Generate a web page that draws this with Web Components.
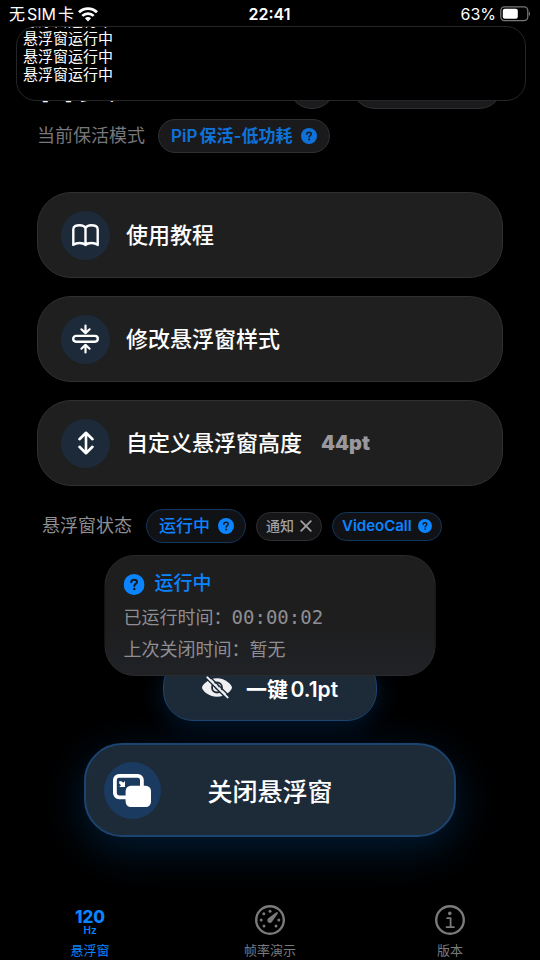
<!DOCTYPE html>
<html lang="zh-CN">
<head>
<meta charset="utf-8">
<meta name="viewport" content="width=device-width, initial-scale=1">
<title>悬浮窗</title>
<style>
  html { background: #000; }
  body {
    margin: 0;
    background: #000;
    color: #fff;
    font-family: Inter, "Noto Sans CJK SC", sans-serif;
    text-autospace: normal;
    --blue: #0a84ff;
    --card: #1f1f20;
    --line: #303033;
    --muted: #8e8e93;
  }
</style>
</head>
<body>
<app-screen>
  <status-bar slot="status"></status-bar>
  <pip-console slot="pip">
    <div>悬浮窗运行中</div>
    <div>悬浮窗运行中</div>
    <div>悬浮窗运行中</div>
    <div>悬浮窗运行中</div>
  </pip-console>
  <page-header>首页</page-header>
  <mode-row>
    <span slot="label">当前保活模式</span>
    <pill-button size="large" dim><span>PiP保活-低功耗</span><app-icon slot="icon" name="help" w="16" h="16"></app-icon></pill-button>
  </mode-row>
  <card-list>
    <menu-card icon="book" w="27" h="23">使用教程</menu-card>
    <menu-card icon="compress" w="27" h="30">修改悬浮窗样式</menu-card>
    <menu-card icon="updown" w="16" h="24">自定义悬浮窗高度<span slot="value">44pt</span></menu-card>
  </card-list>
  <status-row>
    <span slot="label">悬浮窗状态</span>
    <pill-button size="medium" active>运行中<app-icon slot="icon" name="help" w="16" h="16"></app-icon></pill-button>
    <pill-button size="small" plain>通知<app-icon slot="icon" name="close" w="12" h="12"></app-icon></pill-button>
    <pill-button size="small" active strong>VideoCall<app-icon slot="icon" name="help" w="14" h="14"></app-icon></pill-button>
    <info-popover slot="popover">
      <span slot="title">运行中</span>
      <span slot="runtime">00:00:02</span>
      <span slot="closed">暂无</span>
    </info-popover>
  </status-row>
  <action-stack>
    <glow-button size="small"><app-icon slot="icon" name="hidden" w="30" h="23"></app-icon>一键0.1pt</glow-button>
    <glow-button size="large"><app-icon slot="icon" name="pip" w="38" h="33"></app-icon>关闭悬浮窗</glow-button>
  </action-stack>
  <tab-bar slot="tabs">
    <tab-item href="#float" active><hz-mark slot="icon"></hz-mark>悬浮窗</tab-item>
    <tab-item href="#fps"><app-icon slot="icon" name="gauge" w="30" h="30"></app-icon>帧率演示</tab-item>
    <tab-item href="#version"><app-icon slot="icon" name="info" w="30" h="30"></app-icon>版本</tab-item>
  </tab-bar>
</app-screen>

<script>
const ICONS = {
  help: ['0 0 20 20', '<circle cx="10" cy="10" r="10" fill="currentColor"/><path d="M7.3 7.9C7.3 6.3 8.5 5.4 10.1 5.4C11.8 5.4 12.8 6.3 12.8 7.6C12.8 9.5 10.2 9.4 10.2 11.4" fill="none" stroke="#17191d" stroke-width="1.9" stroke-linecap="round"/><circle cx="10.2" cy="14.3" r="1.2" fill="#17191d"/>'],
  close: ['0 0 12 12', '<path d="M1.2 1.2L10.8 10.8M10.8 1.2L1.2 10.8" stroke="currentColor" stroke-width="1.8" stroke-linecap="round"/>'],
  book: ['0 0 27 23', '<path d="M13.5 20.8V4.2C12.6 2.2 10.5 1.2 7.6 1.2C4.9 1.2 1.3 1.8 1.3 5.2V20.9C3 19.6 5 19 7.4 19C10 19 12.2 19.6 13.5 21C14.8 19.6 17 19 19.6 19C22 19 24 19.6 25.7 20.9V5.2C25.7 1.8 22.1 1.2 19.4 1.2C16.5 1.2 14.4 2.2 13.5 4.2" fill="none" stroke="currentColor" stroke-width="2.4" stroke-linejoin="round"/>'],
  compress: ['0 0 27 30', '<rect x="1.2" y="11.9" width="24.6" height="5.8" rx="2.9" fill="none" stroke="currentColor" stroke-width="2.4"/><path d="M13.5 1.6V8.8M9.4 5.3L13.5 9.1L17.6 5.3M13.5 28.4V21.2M9.4 24.7L13.5 20.9L17.6 24.7" fill="none" stroke="currentColor" stroke-width="2.2" stroke-linecap="round" stroke-linejoin="round"/>'],
  updown: ['0 0 16 24', '<path d="M8 2V22M1.5 8.2L8 1.8L14.5 8.2M1.5 15.8L8 22.2L14.5 15.8" fill="none" stroke="currentColor" stroke-width="2.6" stroke-linecap="round" stroke-linejoin="round"/>'],
  hidden: ['0 0 30 23', '<path d="M15 2.2C23.5 2.2 30 8.8 30 11.5C30 14.2 23.5 20.8 15 20.8C6.5 20.8 0 14.2 0 11.5C0 8.8 6.5 2.2 15 2.2Z" fill="#f0f0f2"/><circle cx="15" cy="11.5" r="5" fill="none" stroke="#1d2a38" stroke-width="1.8"/><circle cx="15" cy="11.5" r="2.1" fill="#1d2a38"/><path d="M3.2 1.2L25 23" stroke="#1d2a38" stroke-width="1.8"/><path d="M5.4 1.4L25.6 21.4" stroke="#f0f0f2" stroke-width="2" stroke-linecap="round"/><path d="M7.4 .3L27.4 20.1" stroke="#1d2a38" stroke-width="1.4"/>'],
  pip: ['0 0 38 33', '<rect x="1.9" y="1.9" width="27" height="21.4" rx="4.2" fill="none" stroke="currentColor" stroke-width="3.8"/><rect x="12.6" y="11.8" width="25.4" height="21.2" rx="5.2" fill="currentColor"/><path d="M6.2 7.2H8.4L10.2 8.8L12 7V13H6.2L8 11.2L6.2 9.4Z" fill="currentColor"/>'],
  gauge: ['0 0 30 30', '<circle cx="15" cy="15" r="13.8" fill="none" stroke="currentColor" stroke-width="2.4"/><g fill="currentColor"><circle cx="6.2" cy="15" r="1.5"/><circle cx="8.8" cy="8.8" r="1.5"/><circle cx="15" cy="6.3" r="1.5"/><circle cx="23.8" cy="15" r="1.5"/><circle cx="9" cy="21" r="1.5"/><circle cx="21" cy="21" r="1.5"/><path d="M22.6 7.2C22 6.8 21.4 7.1 21 7.5L13.6 13.1A2.6 2.6 0 1 0 17.2 16.6L22.5 9C22.9 8.3 23 7.7 22.6 7.2Z"/></g>'],
  info: ['0 0 30 30', '<circle cx="15" cy="15" r="13.8" fill="none" stroke="currentColor" stroke-width="2.4"/><circle cx="14.8" cy="8.4" r="1.8" fill="currentColor"/><path d="M12.2 13.2H15.6V22M11.6 22.2H18.8" fill="none" stroke="currentColor" stroke-width="1.8" stroke-linecap="round" stroke-linejoin="round"/>'],
  wifi: ['0 0 20 15', '<g fill="none" stroke="currentColor" stroke-width="2.7"><path d="M1 5.3C6 .3 14 .3 19 5.3"/><path d="M4.3 8.9C7.5 5.8 12.5 5.8 15.7 8.9"/></g><path d="M6.9 11.3C8.6 9.6 11.4 9.6 13.1 11.3L10 14.6Z" fill="currentColor"/>'],
  battery: ['0 0 30 16', '<rect x=".8" y=".8" width="27" height="13.8" rx="3.8" fill="none" stroke="#77777a" stroke-width="1.3"/><rect x="2.8" y="2.7" width="15" height="10" rx="2" fill="#fff"/><path d="M29 5.4C30.4 6 30.4 9.4 29 10Z" fill="#77777a"/>']
};

function define(name, markup, setup) {
  const template = document.createElement('template');
  template.innerHTML = markup;
  customElements.define(name, class extends HTMLElement {
    constructor() {
      super();
      this.attachShadow({ mode: 'open' }).append(template.content.cloneNode(true));
    }
    connectedCallback() { if (setup) setup(this, this.shadowRoot); }
  });
}

define('app-icon', `<style>
  :host { display: block; flex: none; }
  svg { display: block; }
</style><svg aria-hidden="true"></svg>`, (el, root) => {
  const [box, shapes] = ICONS[el.getAttribute('name')];
  const svg = root.querySelector('svg');
  svg.setAttribute('viewBox', box);
  svg.setAttribute('width', el.getAttribute('w'));
  svg.setAttribute('height', el.getAttribute('h'));
  svg.innerHTML = shapes;
});

define('app-screen', `<style>
  :host { display: flex; flex-direction: column; position: relative; min-height: 100vh; overflow: hidden; }
  main { display: flex; flex-direction: column; padding: 33px 37px 24px; }
  footer { margin-top: auto; }
</style>
<slot name="status"></slot><slot name="pip"></slot>
<main><slot></slot></main>
<footer><slot name="tabs"></slot></footer>`);

define('status-bar', `<style>
  :host { display: grid; grid-template-columns: 1fr auto 1fr; align-items: center; height: 28px; padding: 0 10px 0 9px; font-size: 16px; line-height: 28px; }
  .side { display: flex; align-items: center; gap: 4px; }
  .end { justify-content: flex-end; }
  .carrier { display: flex; gap: 2px; }
  time { font-weight: 600; }
</style>
<div class="side"><span class="carrier"><span>无</span><span>SIM</span><span>卡</span></span><app-icon name="wifi" w="20" h="15"></app-icon></div>
<time>22:41</time>
<div class="side end"><span>63%</span><app-icon name="battery" w="30" h="16"></app-icon></div>`);

define('pip-console', `<style>
  :host {
    position: absolute; z-index: 3; top: 26px; left: 16px; right: 14px; height: 75px; box-sizing: border-box;
    display: flex; flex-direction: column; justify-content: flex-end; overflow: hidden;
    padding: 0 6px 16px; border: 1px solid #262628; border-radius: 20px; background: #000;
    font-size: 15px; line-height: 18px;
  }
  ::slotted(div) { flex: none; }
</style><slot></slot>`);

define('page-header', `<style>
  :host { display: flex; align-items: center; height: 48px; gap: 15px; }
  h1 { flex: 1; margin: 0; padding-bottom: 2px; font-size: 40px; line-height: 48px; font-weight: 700; }
  button { box-sizing: border-box; width: 48px; height: 48px; padding: 0; border: 1px solid var(--line); border-radius: 24px; background: #1b1b1e; }
  .wide { width: 152px; }
</style>
<h1><slot></slot></h1><button aria-label="设置"></button><button class="wide" aria-label="更多"></button>`);

define('mode-row', `<style>
  :host { display: flex; align-items: center; gap: 13px; margin-top: 10px; font-size: 18px; line-height: 34px; }
  ::slotted(span) { color: #77777b; }
</style><slot name="label"></slot><slot></slot>`);

define('pill-button', `<style>
  :host { display: block; }
  button {
    display: flex; align-items: center; box-sizing: border-box; margin: 0; white-space: nowrap;
    border: 1px solid var(--line); border-radius: 17px; background: #151517; color: var(--blue);
    font: inherit; font-weight: 500; text-autospace: normal;
  }
  :host([size=large]) button { height: 34px; padding: 0 12px; gap: 9px; font-size: 17px; font-weight: 600; background: #1a1a1c; }
  :host([size=medium]) button { height: 34px; padding: 0 11px 0 12px; gap: 8px; font-size: 17px; }
  :host([size=small]) button { height: 29px; padding: 0 9px; gap: 6px; font-size: 14px; }
  :host([strong]) button { font-size: 15px; font-weight: 600; }
  :host([active]) button { border-color: #12365c; background: #111216; }
  :host([plain]) button { color: #a0a0a4; }
  :host([dim]) button { color: #0f72d8; }
</style><button><slot></slot><slot name="icon"></slot></button>`);

define('card-list', `<style>
  :host { display: flex; flex-direction: column; gap: 18px; margin-top: 39px; }
</style><slot></slot>`);

define('menu-card', `<style>
  :host { display: block; }
  button {
    display: flex; align-items: center; gap: 16px; box-sizing: border-box; width: 100%; height: 86px; margin: 0; padding: 0 23px;
    border: 1px solid var(--line); border-radius: 34px; background: var(--card); color: #fff;
    font: inherit; font-size: 22px; font-weight: 500; line-height: 32px; text-align: left;
  }
  .disc { display: grid; place-items: center; flex: none; width: 49px; height: 49px; border-radius: 50%; background: #1c2a39; }
  ::slotted([slot=value]) { padding-left: 3px; color: #98989d; font-size: 20px; font-weight: 900; }
</style><button><span class="disc"></span><span><slot></slot></span><slot name="value"></slot></button>`, (el, root) => {
  const icon = document.createElement('app-icon');
  icon.setAttribute('name', el.getAttribute('icon'));
  icon.setAttribute('w', el.getAttribute('w'));
  icon.setAttribute('h', el.getAttribute('h'));
  root.querySelector('.disc').replaceChildren(icon);
});

define('status-row', `<style>
  :host { display: flex; align-items: center; position: relative; z-index: 2; height: 34px; margin-top: 23px; padding-left: 5px; gap: 10px; font-size: 18px; line-height: 26px; }
  ::slotted(span) { margin-right: 4px; color: var(--muted); }
</style><slot name="label"></slot><slot></slot><slot name="popover"></slot>`);

define('info-popover', `<style>
  :host {
    display: block; position: absolute; top: 46px; left: 50%; transform: translateX(-50%); width: 71%; box-sizing: border-box;
    padding: 14px 18px 9px; border: 1px solid #2b2b2d; border-radius: 30px;
    background: linear-gradient(#1e1e1f 60%, #202226); color: var(--muted); font-size: 18px; line-height: 32px;
  }
  header { display: flex; align-items: center; gap: 10px; margin-bottom: 4px; color: var(--blue); font-size: 19px; font-weight: 500; line-height: 28px; }
  p { height: 32px; margin: 0; }
  .mono { font-family: "DejaVu Sans Mono", "Noto Sans CJK SC", monospace; font-size: 19px; line-height: 28px; }
</style>
<header><app-icon name="help" w="21" h="21"></app-icon><slot name="title"></slot></header>
<p>已运行时间：<span class="mono"><slot name="runtime"></slot></span></p>
<p>上次关闭时间：<slot name="closed"></slot></p>`);

define('action-stack', `<style>
  :host { display: flex; flex-direction: column; align-items: center; gap: 22px; margin-top: 113px; }
</style><slot></slot>`);

define('glow-button', `<style>
  :host { display: block; }
  button {
    box-sizing: border-box; width: 100%; margin: 0; color: #fff; font: inherit; white-space: nowrap;
    background: #1d2a38; border: 1px solid #1b4470; text-autospace: normal;
  }
  :host([size=small]) button { display: flex; align-items: center; gap: 14px; height: 65px; padding: 0 38px 2px; border-radius: 30px; font-size: 21px; font-weight: 600; box-shadow: 0 6px 26px #0a84ff2e; }
  :host([size=large]) { width: 80%; }
  :host([size=large]) button { display: grid; grid-template-columns: 1fr auto 1fr; align-items: center; height: 94px; padding: 0 18px; border-width: 2px; border-radius: 38px; font-size: 25px; font-weight: 500; box-shadow: 0 12px 44px #0a84ff36; }
  :host([size=large]) .disc { display: grid; place-items: center; width: 57px; height: 57px; border-radius: 50%; background: #1a3a5f; }
</style><button><span class="disc"><slot name="icon"></slot></span><span><slot></slot></span></button>`);

define('hz-mark', `<style>
  :host { display: flex; flex-direction: column; align-items: center; justify-content: flex-end; height: 30px; }
  b { font-size: 17px; line-height: 15px; font-weight: 800; }
  small { font-size: 10px; line-height: 10px; font-weight: 600; }
</style><b>120</b><small>Hz</small>`);

define('tab-bar', `<style>
  :host { display: block; }
  nav { display: flex; height: 55px; }
</style><nav><slot></slot></nav>`);

define('tab-item', `<style>
  :host { display: block; flex: 1; }
  a { display: flex; flex-direction: column; align-items: center; gap: 5px; color: #7a7a7d; font-size: 13px; line-height: 20px; text-decoration: none; }
  :host([active]) a { color: var(--blue); }
</style><a><slot name="icon"></slot><span><slot></slot></span></a>`, (el, root) => {
  const link = root.querySelector('a');
  link.href = el.getAttribute('href');
  if (el.hasAttribute('active')) link.setAttribute('aria-current', 'page');
});
</script>
</body>
</html>
